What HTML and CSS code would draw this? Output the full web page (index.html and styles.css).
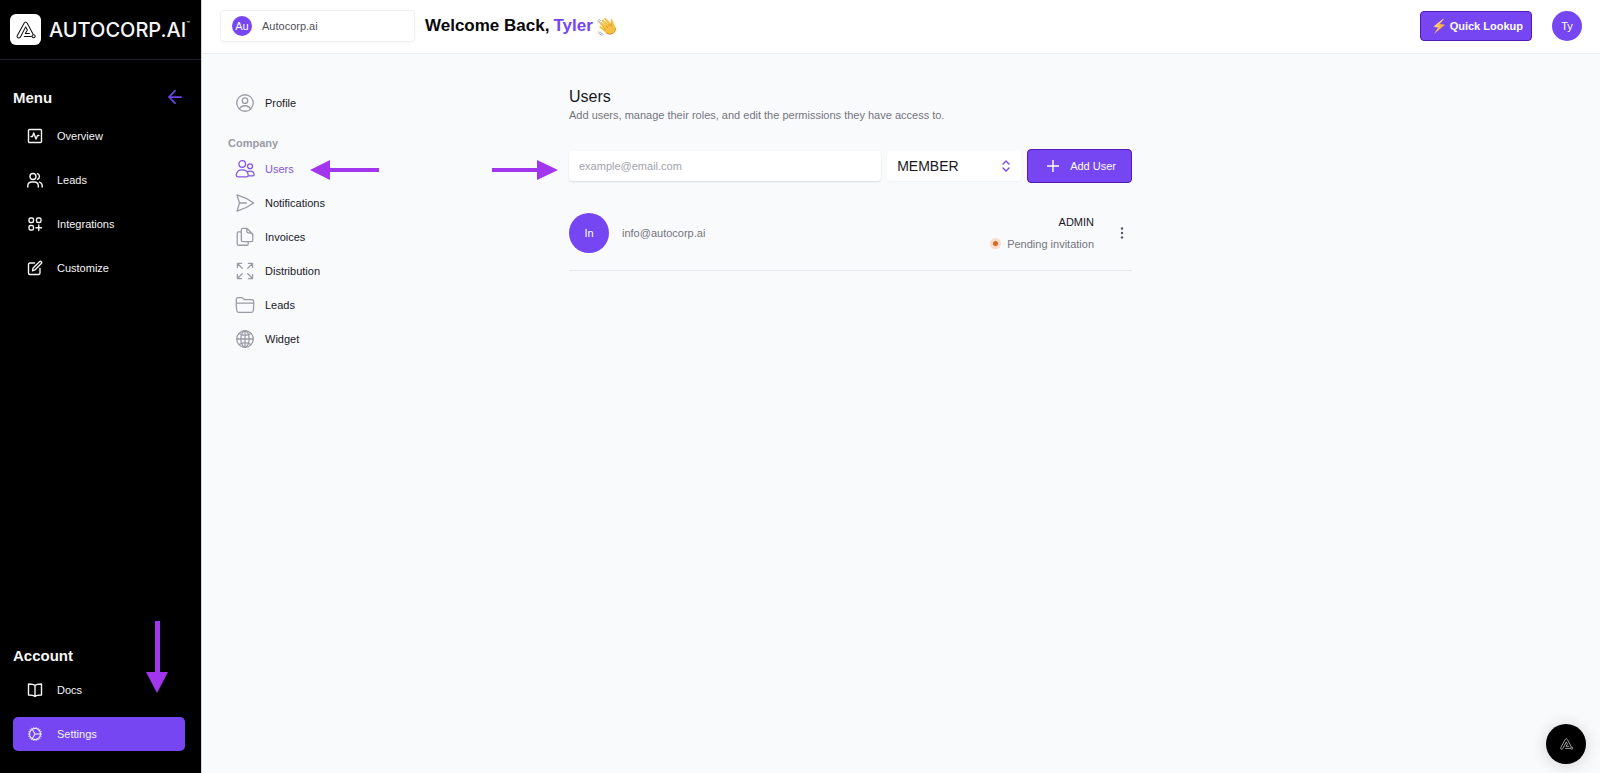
FILE: index.html
```html
<!DOCTYPE html>
<html lang="en">
<head>
<meta charset="utf-8">
<meta name="viewport" content="width=device-width, initial-scale=1">
<title>Autocorp.ai – Users</title>
<link rel="stylesheet" href="styles.css">
</head>
<body>
<svg class="defs" aria-hidden="true">
  <symbol id="mark" viewBox="0 0 56 52">
    <path d="M39 36H26L32 26 27 17 12 46Q8 51 4 48 1 46 3 42L22 7Q27-1 32 7L49 39M45 45H22"/>
    <circle cx="50" cy="44" r="4.500"/>
  </symbol>
</svg>
<div class="app">
  <aside class="sidebar">
    <a class="brand" href="#">
      <span class="brand-icon"><svg class="mark"><use href="#mark"/></svg></span>
      <span class="brand-name">AUTOCORP.AI<sup>™</sup></span>
    </a>
    <div class="side-body">
      <div class="side-head">
        <h2>Menu</h2>
        <button class="collapse" type="button" aria-label="Collapse menu">
          <svg class="line" viewBox="0 0 16 16"><path d="M15 8H1.500M8 1 1 8l7 7"/></svg>
        </button>
      </div>
      <nav class="side-nav">
        <a href="#"><svg class="line" viewBox="0 0 16 16"><rect x="1.500" y="1.500" width="13" height="13" rx="1"/><path d="M4 8.500h1.500l1.200-3.500 2.300 6 1.500-3.500H12"/></svg>Overview</a>
        <a href="#"><svg class="line" viewBox="0 0 16 16"><circle cx="6" cy="4.500" r="3"/><path d="M.8 15v-1.500a4 4 0 0 1 4-3.500h2.500a4 4 0 0 1 4 3.500V15M10.500 1.700a3 3 0 0 1 0 5.600M12.500 10.200a4 4 0 0 1 2.700 3.500V15"/></svg>Leads</a>
        <a href="#"><svg class="line" viewBox="0 0 16 16"><rect x="2" y="2" width="4.500" height="4.500" rx="1.500"/><rect x="9.500" y="2" width="4.500" height="4.500" rx="1.500"/><rect x="2" y="9.500" width="4.500" height="4.500" rx="1.500"/><path d="M11.750 9v5.500M9 11.750h5.500"/></svg>Integrations</a>
        <a href="#"><svg class="line" viewBox="0 0 16 16"><path d="M7.500 3H3Q1.500 3 1.500 4.500v8.500Q1.500 14.500 3 14.500h8.500q1.500 0 1.500-1.500V8.500M5.500 10.800l.6-2.800 6.600-6.400q.8-.6 1.600.1.800.9 0 1.700L7.900 9.900z"/></svg>Customize</a>
      </nav>
      <div class="account">
        <h2>Account</h2>
        <nav class="side-nav">
          <a href="#"><svg class="line" viewBox="0 0 16 16"><path d="M8 3.500Q6.500 2 1.500 2v11q5 0 6.500 1.500Q9.500 13 14.500 13V2Q9.500 2 8 3.500zv11"/></svg>Docs</a>
          <a class="active" href="#" aria-current="page"><svg class="line cog" viewBox="1 1 22 22"><path d="M4.500 12a7.500 7.500 0 0 0 15 0m-15 0a7.500 7.500 0 1 1 15 0m-15 0H3m16.500 0H21m-1.500 0H12m-8.457 3.077 1.410-.513m14.095-5.130 1.410-.513M5.106 17.785l1.150-.964m11.490-9.642 1.149-.964M7.501 19.795l.750-1.300m7.500-12.990.750-1.300m-6.063 16.658.260-1.477m2.605-14.772.260-1.477m0 17.726-.260-1.477M10.698 4.614l-.260-1.477M16.500 19.794l-.750-1.299M7.500 4.205 12 12m6.894 5.785-1.149-.964M6.256 7.178l-1.150-.964m15.352 8.864-1.410-.513M4.954 9.435l-1.410-.514M12.002 12l-3.750 6.495"/></svg>Settings</a>
        </nav>
        <svg class="arrow arrow-down" viewBox="0 0 22 72"><path d="M9 0h5v51h8L11 72 0 51h9z"/></svg>
      </div>
    </div>
  </aside>

  <div class="page">
    <header class="topbar">
      <button class="company" type="button"><span class="avatar small">Au</span>Autocorp.ai</button>
      <h1>Welcome Back, <span>Tyler</span>
        <svg class="wave" viewBox="0 0 20 20" role="img" aria-label="Waving hand">
          <path d="M3.500 6.500Q4 5.500 5 6.200L9 10 4.800 4.700Q4.600 3.400 6 3.500L11 8.300 7.300 2.800Q7.300 1.400 8.600 1.700L14 7.500 13.600 3.700Q14.200 2.300 15.300 3.600L18 10.500Q19.800 15 16 17.500 12 20 8.500 16.500L2.500 11.500Q1.900 10.200 3.300 10.100L6.500 12 2.700 8Q2.500 6.800 3.500 6.500z" fill="#f5c044"/>
          <path d="M9 10l1.800 1.800M11 8.300l2 2M6.500 12l2 1.700M14 7.500l.4 2.200M9 16.700q4 3 7.500.2 2.700-2 1.800-5.200" fill="none" stroke="#d99124"/>
          <path d="M.8 6.300Q1 4 3 2.700M2.300 7Q2 5.500 3.800 4M3 15.500q1 2.300 3.500 2.800M1.300 15.500q.8 3 3.800 3.900" fill="none" stroke="#a9adb5"/>
        </svg>
      </h1>
      <div class="top-actions">
        <button class="primary lookup" type="button">
          <svg class="bolt" viewBox="0 0 12 16"><path d="M11.500 0 0 8.800l5 .7L1 16 12 6.700 6.800 6z" fill="#fbb54b"/><path d="M10 1.500 2.500 8l4 .7" fill="none" stroke="#ffdf9a"/></svg>
          Quick Lookup
        </button>
        <button class="avatar medium" type="button">Ty</button>
      </div>
    </header>

    <div class="content">
      <nav class="subnav">
        <a href="#"><svg class="line" viewBox="0 0 24 24"><circle cx="12" cy="12" r="9"/><circle cx="12" cy="9.500" r="3"/><path d="M6 18.500q1.500-3.500 6-3.500t6 3.500"/></svg>Profile</a>
        <h3>Company</h3>
        <a class="current" href="#" aria-current="page"><svg class="line" viewBox="0 0 24 24"><circle cx="9" cy="6.500" r="3.600"/><circle cx="17.500" cy="9" r="2.700"/><path d="M2.500 18.500Q3 13 9 13t6.500 5.500q0 2-1.500 2H4q-1.500 0-1.500-2zM14.500 15q1-.7 3-.7 4 0 4.500 3.700 0 1.500-1.500 1.500H15.500"/></svg>Users
          <svg class="arrow arrow-left" viewBox="0 0 69 20"><path d="M0 10 20 0v8h49v4H20v8z"/></svg>
        </a>
        <a href="#"><svg class="line" viewBox="0 0 24 24"><path d="M6 12 3.300 3.100A60 60 0 0 1 21.500 12 60 60 0 0 1 3.300 20.900zm0 0h7.500"/></svg>Notifications</a>
        <a href="#"><svg class="line" viewBox="0 0 24 24"><path d="M8 6.500H5Q3.500 6.500 3.500 8v11.500Q3.500 21 5 21h9q1.500 0 1.500-1.500V17M9.500 2.500H14l6.500 6.500v6.500q0 1.500-1.500 1.500H9.500Q8 17 8 15.500V4q0-1.500 1.500-1.500zM14 2.500V6q0 1.500 1.500 1.500H17q3.500 0 3.500 3"/></svg>Invoices</a>
        <a href="#"><svg class="line" viewBox="0 0 24 24"><path d="M3.750 3.750v4.500m0-4.500h4.500m-4.500 0L9 9M3.750 20.250v-4.500m0 4.500h4.500m-4.500 0L9 15M20.250 3.750h-4.500m4.500 0v4.500m0-4.500L15 9m5.250 11.250h-4.500m4.500 0v-4.500m0 4.500L15 15"/></svg>Distribution</a>
        <a href="#"><svg class="line" viewBox="0 0 24 24"><path d="M2.500 10V6Q2.500 4 4.500 4H8q1 0 1.800.8l.9.800q.8.600 1.700.6h7.100q2 0 2 2V10M4 10h16q1.800 0 1.600 1.800l-.5 6.200q-.2 2-2 2H5q-1.800 0-2-2l-.6-6.200Q2.200 10 4 10z"/></svg>Leads</a>
        <a href="#"><svg class="line" viewBox="0 0 24 24"><circle cx="12" cy="12" r="9"/><ellipse cx="12" cy="12" rx="4.500" ry="9"/><path d="M3 12h18M12 3v18M5.500 6q6.500 4 13 0M5.500 18q6.500-4 13 0"/></svg>Widget</a>
      </nav>

      <main class="users">
        <h2>Users</h2>
        <p class="lead">Add users, manage their roles, and edit the permissions they have access to.</p>
        <form class="invite">
          <svg class="arrow arrow-right" viewBox="0 0 66 20"><path d="M66 10 45 20v-8H0V8h45V0z"/></svg>
          <input class="field" type="email" placeholder="example@email.com" aria-label="Email address">
          <span class="role">
            <select class="field" aria-label="Role"><option>MEMBER</option><option>ADMIN</option></select>
            <svg class="line" viewBox="0 0 8 12"><path d="M1 4l3-3 3 3M1 8l3 3 3-3"/></svg>
          </span>
          <button class="primary add" type="button"><svg class="line" viewBox="0 0 12 12"><path d="M6 0v12M0 6h12"/></svg>Add User</button>
        </form>
        <ul class="user-list">
          <li>
            <span class="avatar large">In</span>
            <span class="email">info@autocorp.ai</span>
            <div class="status"><span class="level">ADMIN</span><span class="pending"><i></i>Pending invitation</span></div>
            <button class="more" type="button" aria-label="User options"><svg viewBox="0 0 4 12"><circle cx="2" cy="1.500" r="1.200"/><circle cx="2" cy="6" r="1.200"/><circle cx="2" cy="10.500" r="1.200"/></svg></button>
          </li>
        </ul>
      </main>
    </div>
  </div>
</div>
<button class="chat" type="button" aria-label="Open chat"><svg class="mark"><use href="#mark"/></svg></button>
</body>
</html>
```
FILE: styles.css
```css
* { box-sizing: border-box; }
body {
  margin: 0;
  font: 11px/16px "Liberation Sans", Arial, sans-serif;
  color: #18181f;
  background: #f9fafc;
}
h1, h2, h3, p, ul { margin: 0; padding: 0; }
ul { list-style: none; }
a { color: inherit; text-decoration: none; }
button, input, select { font: inherit; color: inherit; border: 0; margin: 0; padding: 0; background: none; }
button { cursor: pointer; }
svg { display: block; flex: none; }
.defs { display: none; }
.line { fill: none; stroke: currentColor; stroke-width: 1.400; stroke-linecap: round; stroke-linejoin: round; }
.mark { fill: none; stroke: currentColor; stroke-width: 3; stroke-linejoin: round; }
.arrow { position: absolute; fill: #a236ee; pointer-events: none; }

.app { display: flex; min-height: 100vh; }

.sidebar {
  display: flex;
  flex-direction: column;
  flex: none;
  width: 202px;
  color: #f5f5f7;
  background: #000;
  border-right: 1px solid #d4d5d8;
}
.brand {
  display: flex;
  align-items: center;
  gap: 8px;
  height: 60px;
  padding: 0 10px;
  border-bottom: 1px solid #20202c;
}
.brand-icon {
  display: grid;
  place-items: center;
  flex: none;
  width: 31px;
  height: 31px;
  color: #111;
  background: #fff;
  border-radius: 6px;
}
.brand-icon .mark { width: 20px; height: 18px; }
.brand-name { display: flex; font: 500 20px/24px Inter, sans-serif; }
.brand-name sup { font-size: 6px; line-height: 12px; }

.side-body {
  display: flex;
  flex-direction: column;
  flex: 1;
  padding: 24px 16px 22px 13px;
}
.side-head { display: flex; align-items: center; justify-content: space-between; }
.sidebar h2 { font-size: 15px; line-height: 28px; }
.collapse { padding: 3px 3px 5px; color: #6d43e8; }
.collapse svg { width: 14px; height: 14px; stroke-width: 2; }
.side-nav { display: flex; flex-direction: column; gap: 10px; margin-top: 7px; }
.side-nav a {
  display: flex;
  align-items: center;
  gap: 14px;
  height: 34px;
  padding: 0 14px;
  border-radius: 5px;
}
.side-nav svg { width: 16px; height: 16px; }
.side-nav .active { background: #7546f2; }
.account { position: relative; margin-top: auto; }
.account .side-nav { margin-top: 3px; }
.arrow-down { width: 22px; height: 72px; top: -21px; right: 17px; }

.page { flex: 1; min-width: 0; }
.topbar {
  display: flex;
  align-items: center;
  gap: 10px;
  height: 54px;
  padding: 0 18px 2px;
  background: #fff;
  border-bottom: 1px solid #eeeff2;
}
.company {
  display: flex;
  align-items: center;
  gap: 10px;
  width: 195px;
  height: 32px;
  padding: 0 11px;
  color: #50505a;
  border: 1px solid #f0f0f2;
  border-radius: 4px;
  box-shadow: 0 1px 2px #0000000a;
}
.avatar { display: grid; place-items: center; flex: none; color: #fff; background: #7546f2; border-radius: 50%; }
.small { width: 20px; height: 20px; }
.medium { width: 30px; height: 30px; }
.large { width: 40px; height: 40px; }
.topbar h1 { display: flex; align-items: center; gap: 4px; font-size: 17px; line-height: 24px; color: #08080b; }
.topbar h1 span { color: #7546f2; }
.wave { width: 20px; height: 20px; }
.top-actions { display: flex; align-items: center; gap: 20px; margin-left: auto; }
.primary {
  display: flex;
  align-items: center;
  color: #fff;
  background: #7546f2;
  border: 1px solid #5519b8;
  border-radius: 4px;
}
.lookup { gap: 5px; height: 30px; padding: 0 8px 0 12px; font-weight: 700; }
.bolt { width: 12px; height: 16px; }

.content { display: flex; padding: 32px 26px; }
.subnav { flex: none; width: 341px; }
.subnav a { position: relative; display: flex; align-items: center; gap: 9px; width: max-content; height: 34px; padding-left: 6px; }
.subnav .line { width: 22px; height: 22px; color: #9a9ba5; }
.subnav h3 { margin-top: 15px; color: #9a9ba5; font-size: 11px; line-height: 17px; }
.subnav .current, .subnav .current .line { color: #8256df; }
.arrow-left { width: 69px; height: 20px; left: 82px; top: 8px; }

.users { flex: 1; min-width: 0; max-width: 563px; }
.users h2 { font-size: 16px; font-weight: 400; line-height: 22px; }
.lead { color: #74757e; line-height: 14px; }
.invite { position: relative; display: flex; align-items: center; gap: 6px; margin-top: 27px; }
.field { height: 30px; padding: 0 10px; background: #fff; border-radius: 4px; box-shadow: 0 1px 2px #0000001f; }
.invite input { flex: 1; min-width: 0; }
.invite input::placeholder { color: #a3a4ad; opacity: 1; }
.role { position: relative; width: 134px; }
.role .field { width: 100%; font-size: 14px; appearance: none; box-shadow: 0 1px 2px #0000000a; }
.role svg { position: absolute; right: 11px; top: 9px; width: 8px; height: 12px; color: #7546f2; pointer-events: none; }
.add { gap: 11px; height: 34px; padding: 0 15px 0 19px; }
.add svg { width: 12px; height: 12px; }
.arrow-right { width: 66px; height: 20px; left: -77px; top: 11px; }
.user-list { margin-top: 20px; }
.user-list li { display: flex; align-items: center; height: 68px; padding-bottom: 8px; border-bottom: 1px solid #e5e6ea; }
.email { margin-left: 13px; color: #74757e; }
.status { display: grid; justify-items: end; gap: 6px; margin-left: auto; }
.pending { display: flex; align-items: center; gap: 6px; color: #74757e; }
.pending i { width: 11px; height: 11px; background: #d56a22; border: 3px solid #f8dcc9; border-radius: 50%; }
.more { margin-left: 18px; padding: 6px 8px; color: #555662; }
.more svg { width: 4px; height: 12px; fill: currentColor; }

.chat {
  position: fixed;
  right: 14px;
  bottom: 9px;
  display: grid;
  place-items: center;
  width: 40px;
  height: 40px;
  color: #ddd;
  background: #000;
  border-radius: 50%;
  box-shadow: 0 1px 16px #00000029;
}
.chat .mark { width: 13px; height: 12px; }
```
